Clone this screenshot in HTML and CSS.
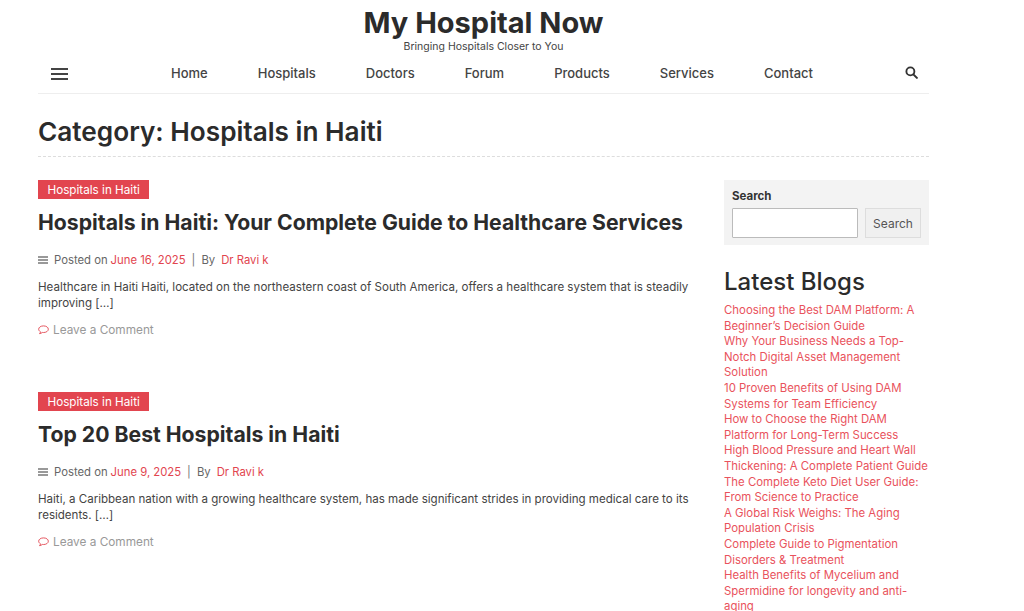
FILE: index.html
```html
<!DOCTYPE html>
<html lang="en">
<head>
    <meta charset="UTF-8">
    <title>Hospitals in Haiti - My Hospital Now</title>
    <link rel="stylesheet" href="styles.css">
</head>
<body>
<div class="page">
    <header class="site-head">
        <h1 class="site-title">My Hospital Now</h1>
        <p class="site-tag">Bringing Hospitals Closer to You</p>
    </header>
    <nav class="nav">
        <div class="burger"><span></span><span></span><span></span></div>
        <ul class="menu">
            <li>Home</li>
            <li>Hospitals</li>
            <li>Doctors</li>
            <li>Forum</li>
            <li>Products</li>
            <li>Services</li>
            <li>Contact</li>
        </ul>
        <svg class="search-icon" viewBox="0 0 14 14" width="13" height="13"><circle cx="5.800" cy="5.800" r="4.300" fill="none" stroke="#333" stroke-width="2"/><path d="M9 9l3.800 3.800" stroke="#333" stroke-width="2.200" stroke-linecap="round"/></svg>
    </nav>
    <h2 class="cat-title">Category: Hospitals in Haiti</h2>
    <div class="columns">
        <main class="posts">
            <article class="post">
                <a class="badge">Hospitals in Haiti</a>
                <h3 class="post-title">Hospitals in Haiti: Your Complete Guide to Healthcare Services</h3>
                <div class="meta">
                    <span class="lines"><i></i><i></i><i></i></span>
                    <span>Posted on</span> <a>June 16, 2025</a><span class="sep">|</span><span>By</span><a class="author">Dr Ravi k</a>
                </div>
                <p class="excerpt">Healthcare in Haiti Haiti, located on the northeastern coast of South America, offers a healthcare system that is steadily improving [&hellip;]</p>
                <div class="comment">
                    <svg viewBox="0 0 12 11" width="11" height="10"><path d="M6 1C3 1 .7 2.500.7 4.600c0 1.200.8 2.200 2 2.900-.1.800-.6 1.500-1.100 2 1.200-.1 2.300-.6 3.100-1.300.4.100.8.100 1.300.100 3 0 5.300-1.600 5.300-3.700S9 1 6 1z" fill="none" stroke="#e2454f" stroke-width="1"/></svg>
                    <span>Leave a Comment</span>
                </div>
            </article>
            <article class="post">
                <a class="badge">Hospitals in Haiti</a>
                <h3 class="post-title">Top 20 Best Hospitals in Haiti</h3>
                <div class="meta">
                    <span class="lines"><i></i><i></i><i></i></span>
                    <span>Posted on</span> <a>June 9, 2025</a><span class="sep">|</span><span>By</span><a class="author">Dr Ravi k</a>
                </div>
                <p class="excerpt">Haiti, a Caribbean nation with a growing healthcare system, has made significant strides in providing medical care to its residents. [&hellip;]</p>
                <div class="comment">
                    <svg viewBox="0 0 12 11" width="11" height="10"><path d="M6 1C3 1 .7 2.500.7 4.600c0 1.200.8 2.200 2 2.900-.1.800-.6 1.500-1.100 2 1.200-.1 2.300-.6 3.100-1.300.4.100.8.100 1.300.100 3 0 5.300-1.600 5.300-3.700S9 1 6 1z" fill="none" stroke="#e2454f" stroke-width="1"/></svg>
                    <span>Leave a Comment</span>
                </div>
            </article>
        </main>
        <aside class="sidebar">
            <div class="search-box">
                <label class="search-label">Search</label>
                <div class="search-row">
                    <input class="search-input" type="text">
                    <button class="search-btn">Search</button>
                </div>
            </div>
            <h2 class="side-title">Latest Blogs</h2>
            <ul class="side-list">
                <li>Choosing the Best DAM Platform: A Beginner&rsquo;s Decision Guide</li>
                <li>Why Your Business Needs a Top-Notch Digital Asset Management Solution</li>
                <li>10 Proven Benefits of Using DAM Systems for Team Efficiency</li>
                <li>How to Choose the Right DAM Platform for Long-Term Success</li>
                <li>High Blood Pressure and Heart Wall Thickening: A Complete Patient Guide</li>
                <li>The Complete Keto Diet User Guide: From Science to Practice</li>
                <li>A Global Risk Weighs: The Aging Population Crisis</li>
                <li>Complete Guide to Pigmentation Disorders &amp; Treatment</li>
                <li>Health Benefits of Mycelium and Spermidine for longevity and anti-aging</li>
            </ul>
        </aside>
    </div>
</div>
</body>
</html>
```

FILE: styles.css
```css
*{
    margin: 0;
    padding: 0;
    box-sizing: border-box;
}
html,body{
    height: 611px;
    overflow: hidden;
}
body{
    background: #ffffff;
    font-family: "Inter", "Liberation Sans", sans-serif;
    color: #333333;
}
li{
    list-style: none;
}
.page{
    width: 891px;
    margin-left: 38px;
}
.site-head{
    text-align: center;
    height: 56px;
    padding-top: 6px;
}
.site-title{
    font-size: 29px;
    line-height: 34px;
    font-weight: 700;
    color: #2b2b2b;
}
.site-tag{
    font-size: 10.5px;
    line-height: 14px;
    color: #444444;
}
.nav{
    display: flex;
    align-items: center;
    height: 38px;
    border-bottom: 1px solid #eeeeee;
    padding: 0 11px 2px 13px;
}
.burger{
    width: 17px;
    display: flex;
    flex-direction: column;
    gap: 3px;
}
.burger span{
    height: 2px;
    background: #444444;
    display: block;
}
.menu{
    display: flex;
    flex: 1;
    justify-content: center;
    gap: 50px;
    padding-left: 11px;
    margin-bottom: 2px;
    font-size: 13px;
    font-weight: 500;
    color: #444444;
}
.search-icon{
    margin-bottom: 2px;
}
.cat-title{
    font-size: 26.2px;
    line-height: 34px;
    font-weight: 600;
    color: #2b2b2b;
    padding: 21px 0 8px;
    height: 63px;
    border-bottom: 1px dashed #dddddd;
}
.columns{
    display: flex;
    justify-content: space-between;
    padding-top: 23px;
}
.posts{
    width: 660px;
}
.post{
    height: 212px;
}
.badge{
    display: block;
    width: fit-content;
    background: #e2454f;
    color: #ffffff;
    font-size: 11.7px;
    line-height: 18px;
    padding: 1px 9.500px 0;
}
.post-title{
    font-size: 21.200px;
    line-height: 28px;
    font-weight: 700;
    color: #2b2b2b;
    margin-top: 9px;
}
.meta{
    display: flex;
    align-items: center;
    font-size: 11.3px;
    line-height: 16px;
    color: #666666;
    margin-top: 16px;
}
.meta a{
    color: #e2454f;
    margin-left: 3px;
}
.meta .sep{
    margin: 0 6px;
    color: #777777;
}
.meta .author{
    margin-left: 6px;
}
.lines{
    width: 10px;
    display: flex;
    flex-direction: column;
    gap: 1px;
    margin-right: 6px;
}
.lines i{
    height: 2px;
    background: #999999;
    display: block;
}
.excerpt{
    font-size: 11.550px;
    line-height: 16px;
    color: #444444;
    margin-top: 11px;
}
.comment{
    display: flex;
    align-items: center;
    gap: 4px;
    font-size: 11.8px;
    line-height: 16px;
    color: #999999;
    margin-top: 11px;
}
.sidebar{
    width: 205px;
}
.search-box{
    background: #f3f3f3;
    height: 65px;
    padding: 9px 8px 0 8px;
}
.search-label{
    display: block;
    font-size: 11.5px;
    line-height: 14px;
    font-weight: 700;
    color: #333333;
}
.search-row{
    display: flex;
    gap: 7px;
    margin-top: 5px;
}
.search-input{
    width: 126px;
    height: 30px;
    border: 1px solid #bbbbbb;
    background: #ffffff;
    border-radius: 1px;
}
.search-btn{
    width: 57px;
    height: 30px;
    border: 1px solid #dddddd;
    background: #f0f0f0;
    color: #555555;
    font: 12px "Inter", sans-serif;
}
.side-title{
    font-size: 24px;
    line-height: 32px;
    font-weight: 500;
    color: #2b2b2b;
    margin-top: 21px;
    margin-bottom: 5px;
}
.side-list{
    font-size: 11.4px;
    line-height: 15.6px;
    color: #e9525c;
}
```
